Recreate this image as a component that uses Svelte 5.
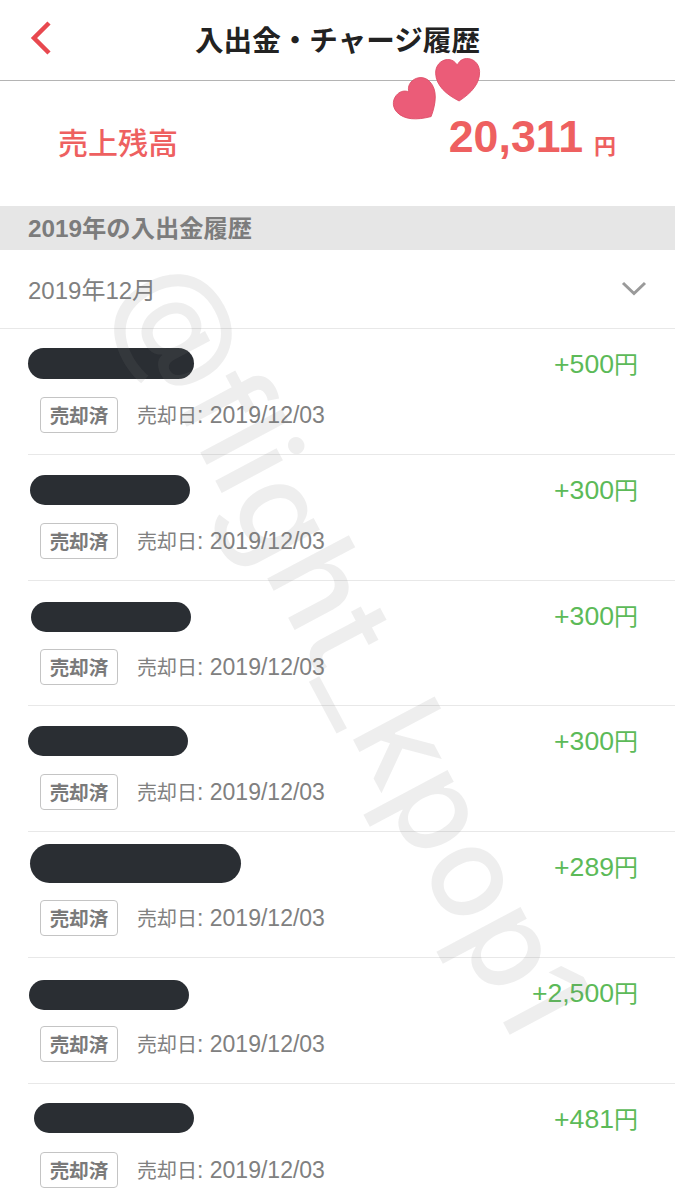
<script>
  const rows = [
    { amount: '+500', top: 19, left: 28, w: 166, h: 31 },
    { amount: '+300', top: 20, left: 30, w: 160, h: 30 },
    { amount: '+300', top: 21, left: 31, w: 160, h: 30 },
    { amount: '+300', top: 20, left: 28, w: 160, h: 30 },
    { amount: '+289', top: 12, left: 30, w: 211, h: 39 },
    { amount: '+2,500', top: 22, left: 29, w: 160, h: 30 },
    { amount: '+481', top: 19, left: 34, w: 160, h: 30 }
  ];
  const heart = 'M22 40 C9 33 0 24 0 13 C0 5 6 0 12.5 0 C16.5 0 20 2 22 6 C24 2 27.5 0 31.5 0 C38 0 44 5 44 13 C44 24 35 33 22 40 Z';
</script>

<div class="page">
  <header class="nav">
    <svg class="back" width="24" height="36" viewBox="0 0 24 36" aria-label="戻る">
      <path d="M20 3 L5 18 L20 33" fill="none" stroke="#e8484f" stroke-width="4.5" />
    </svg>
    <h1>入出金・チャージ履歴</h1>
  </header>

  <section class="balance">
    <div class="balance-label">売上残高</div>
    <div class="balance-value">20,311<span>円</span></div>
  </section>

  <div class="year">2019年の入出金履歴</div>

  <div class="month">
    <span>2019年12月</span>
    <svg width="26" height="15" viewBox="0 0 26 15">
      <path d="M2 2 L13 12.5 L24 2" fill="none" stroke="#9a9a9a" stroke-width="3" />
    </svg>
  </div>

  {#each rows as row}
    <div class="row">
      <div class="mask" style="top: {row.top}px; left: {row.left}px; width: {row.w}px; height: {row.h}px"></div>
      <div class="amount">{row.amount}<span>円</span></div>
      <div class="meta">
        <span class="tag">売却済</span>
        <span class="date"><span>売却日</span>: 2019/12/03</span>
      </div>
    </div>
  {/each}

  <!-- stickers and watermark over the screenshot -->
  <svg class="hearts" width="100" height="70" viewBox="0 0 100 70">
    <g fill="#eb5c78" stroke="#dc4a64" stroke-width="0.8">
      <path d={heart} transform="translate(68 25) rotate(-3) scale(1 1.05) translate(-22 -20)" />
      <path d={heart} transform="translate(28 47) rotate(-42) scale(1.02 0.98) translate(-22 -20)" />
    </g>
  </svg>

  <div class="watermark">@flight_kpop1</div>
</div>

<style>
  :global(body) {
    margin: 0;
    background: #fff;
  }
  .page {
    position: relative;
    width: 675px;
    height: 1200px;
    overflow: hidden;
    background: #fff;
    font-family: "Liberation Sans", "Noto Sans CJK JP", sans-serif;
  }
  .nav {
    position: relative;
    display: flex;
    align-items: center;
    justify-content: center;
    height: 80px;
    border-bottom: 1px solid #b4b4b4;
  }
  .back {
    position: absolute;
    left: 29px;
    top: 20px;
  }
  h1 {
    margin: 0 0 3px 0;
    font-size: 28.6px;
    font-weight: 700;
    color: #222;
  }
  .balance {
    display: flex;
    justify-content: space-between;
    align-items: center;
    height: 125px;
    padding: 0 59px 0 58px;
    color: #ee6060;
  }
  .balance-label {
    font-size: 30px;
    font-weight: 500;
    margin-bottom: 5px;
  }
  .balance-value {
    font-size: 44.7px;
    font-weight: 700;
    margin-bottom: 14px;
  }
  .balance-value span {
    font-size: 22px;
    font-weight: 700;
    margin-left: 11px;
    position: relative;
    top: 2px;
  }
  .year {
    height: 44px;
    line-height: 46px;
    padding-left: 28px;
    background: #e6e6e6;
    color: #7c7c7c;
    font-size: 24.3px;
    font-weight: 700;
  }
  .month {
    display: flex;
    justify-content: space-between;
    align-items: center;
    height: 79px;
    padding: 0 28px 2px;
    box-sizing: border-box;
    border-bottom: 1px solid #e8e8e8;
    color: #808080;
    font-size: 24px;
  }
  .row {
    position: relative;
    height: 125.8px;
    box-sizing: border-box;
    margin-left: 28px;
    border-bottom: 1px solid #e8e8e8;
  }
  .row:last-of-type {
    border-bottom: 0;
  }
  .mask {
    position: absolute;
    margin-left: -28px;
    background: #2a2e33;
    border-radius: 20px;
  }
  .amount {
    padding: 20px 37px 0 0;
    height: 30px;
    line-height: 30px;
    text-align: right;
    color: #5cba58;
    font-size: 26.6px;
  }
  .amount span {
    font-size: 24px;
  }
  .meta {
    display: flex;
    align-items: center;
    gap: 19px;
    margin: 18px 0 0 12px;
  }
  .tag {
    display: block;
    width: 78px;
    height: 36px;
    box-sizing: border-box;
    line-height: 37px;
    text-align: center;
    border: 1.5px solid #c4c4c4;
    border-radius: 4px;
    color: #7a7a7a;
    font-size: 19.5px;
    font-weight: 700;
  }
  .date {
    color: #808080;
    font-size: 23px;
    margin-bottom: 1px;
  }
  .date span {
    font-size: 20px;
  }
  .hearts {
    position: absolute;
    left: 390px;
    top: 55px;
  }
  .watermark {
    position: absolute;
    left: 155px;
    top: 207px;
    transform-origin: 0 50%;
    transform: rotate(62deg);
    white-space: nowrap;
    color: rgba(120, 120, 120, 0.13);
    font-family: "Inter", sans-serif;
    font-weight: 500;
    font-size: 127px;
    line-height: 1;
  }
</style>
